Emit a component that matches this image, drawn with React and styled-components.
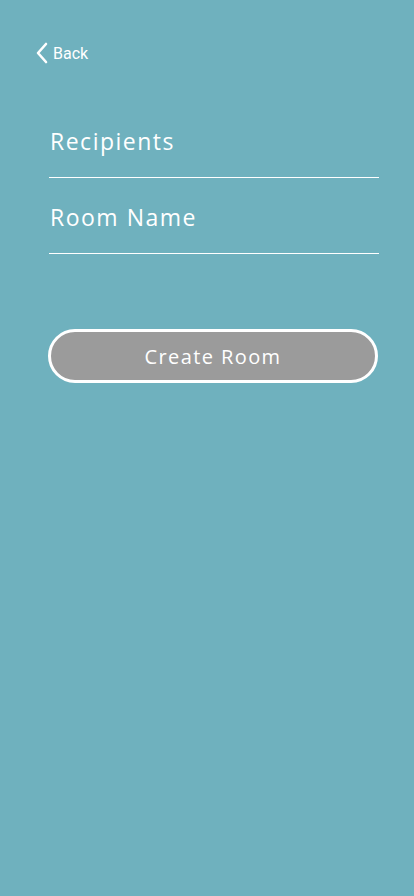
import React from "react";
import styled, { createGlobalStyle } from "styled-components";

const Global = createGlobalStyle`
  html, body {
    margin: 0;
    padding: 0;
    background: #6fb1be;
  }
  * { box-sizing: border-box; }
`;

const Screen = styled.div`
  width: 414px;
  min-height: 896px;
  background: #6fb1be;
  padding: 41px 35px 0 35px;
  font-family: "Open Sans", "DejaVu Sans", sans-serif;
  color: #fff;
`;

const BackButton = styled.button`
  display: flex;
  align-items: center;
  gap: 5px;
  background: none;
  border: none;
  padding: 0;
  color: #fff;
  font-family: Roboto, "Liberation Sans", sans-serif;
  font-size: 16px;
  cursor: pointer;
  height: 24px;
`;

const Form = styled.div`
  margin-top: 34px;
  padding-left: 14px;
  display: flex;
  flex-direction: column;
`;

const Field = styled.div`
  height: 76px;
  display: flex;
  align-items: center;
  border-bottom: 1px solid #fff;
  font-size: 23px;
  font-weight: 500;
  letter-spacing: 1.5px;
  padding-top: 2px;
  padding-left: 1px;
`;

const FieldRow = styled(Field)`
  &:first-child {
    height: 79px;
    align-items: flex-end;
    padding-bottom: 20px;
  }
`;

const CreateButton = styled.button`
  margin-top: 75px;
  margin-left: -1px;
  width: 330px;
  height: 54px;
  border: 3px solid #fff;
  border-radius: 27px;
  background: #9b9b9b;
  color: #fff;
  font-family: "Open Sans", "DejaVu Sans", sans-serif;
  font-size: 20px;
  font-weight: 500;
  letter-spacing: 1.4px;
  cursor: pointer;
`;

export default function App() {
  return (
    <>
      <Global />
      <Screen>
        <BackButton>
          <svg width="13" height="22" viewBox="0 0 13 22" fill="none">
            <path d="M11 2 L3 11 L11 20" stroke="#fff" strokeWidth="2.6" strokeLinecap="round" strokeLinejoin="round" />
          </svg>
          Back
        </BackButton>
        <Form>
          <FieldRow>Recipients</FieldRow>
          <Field>Room Name</Field>
          <CreateButton>Create Room</CreateButton>
        </Form>
      </Screen>
    </>
  );
}
